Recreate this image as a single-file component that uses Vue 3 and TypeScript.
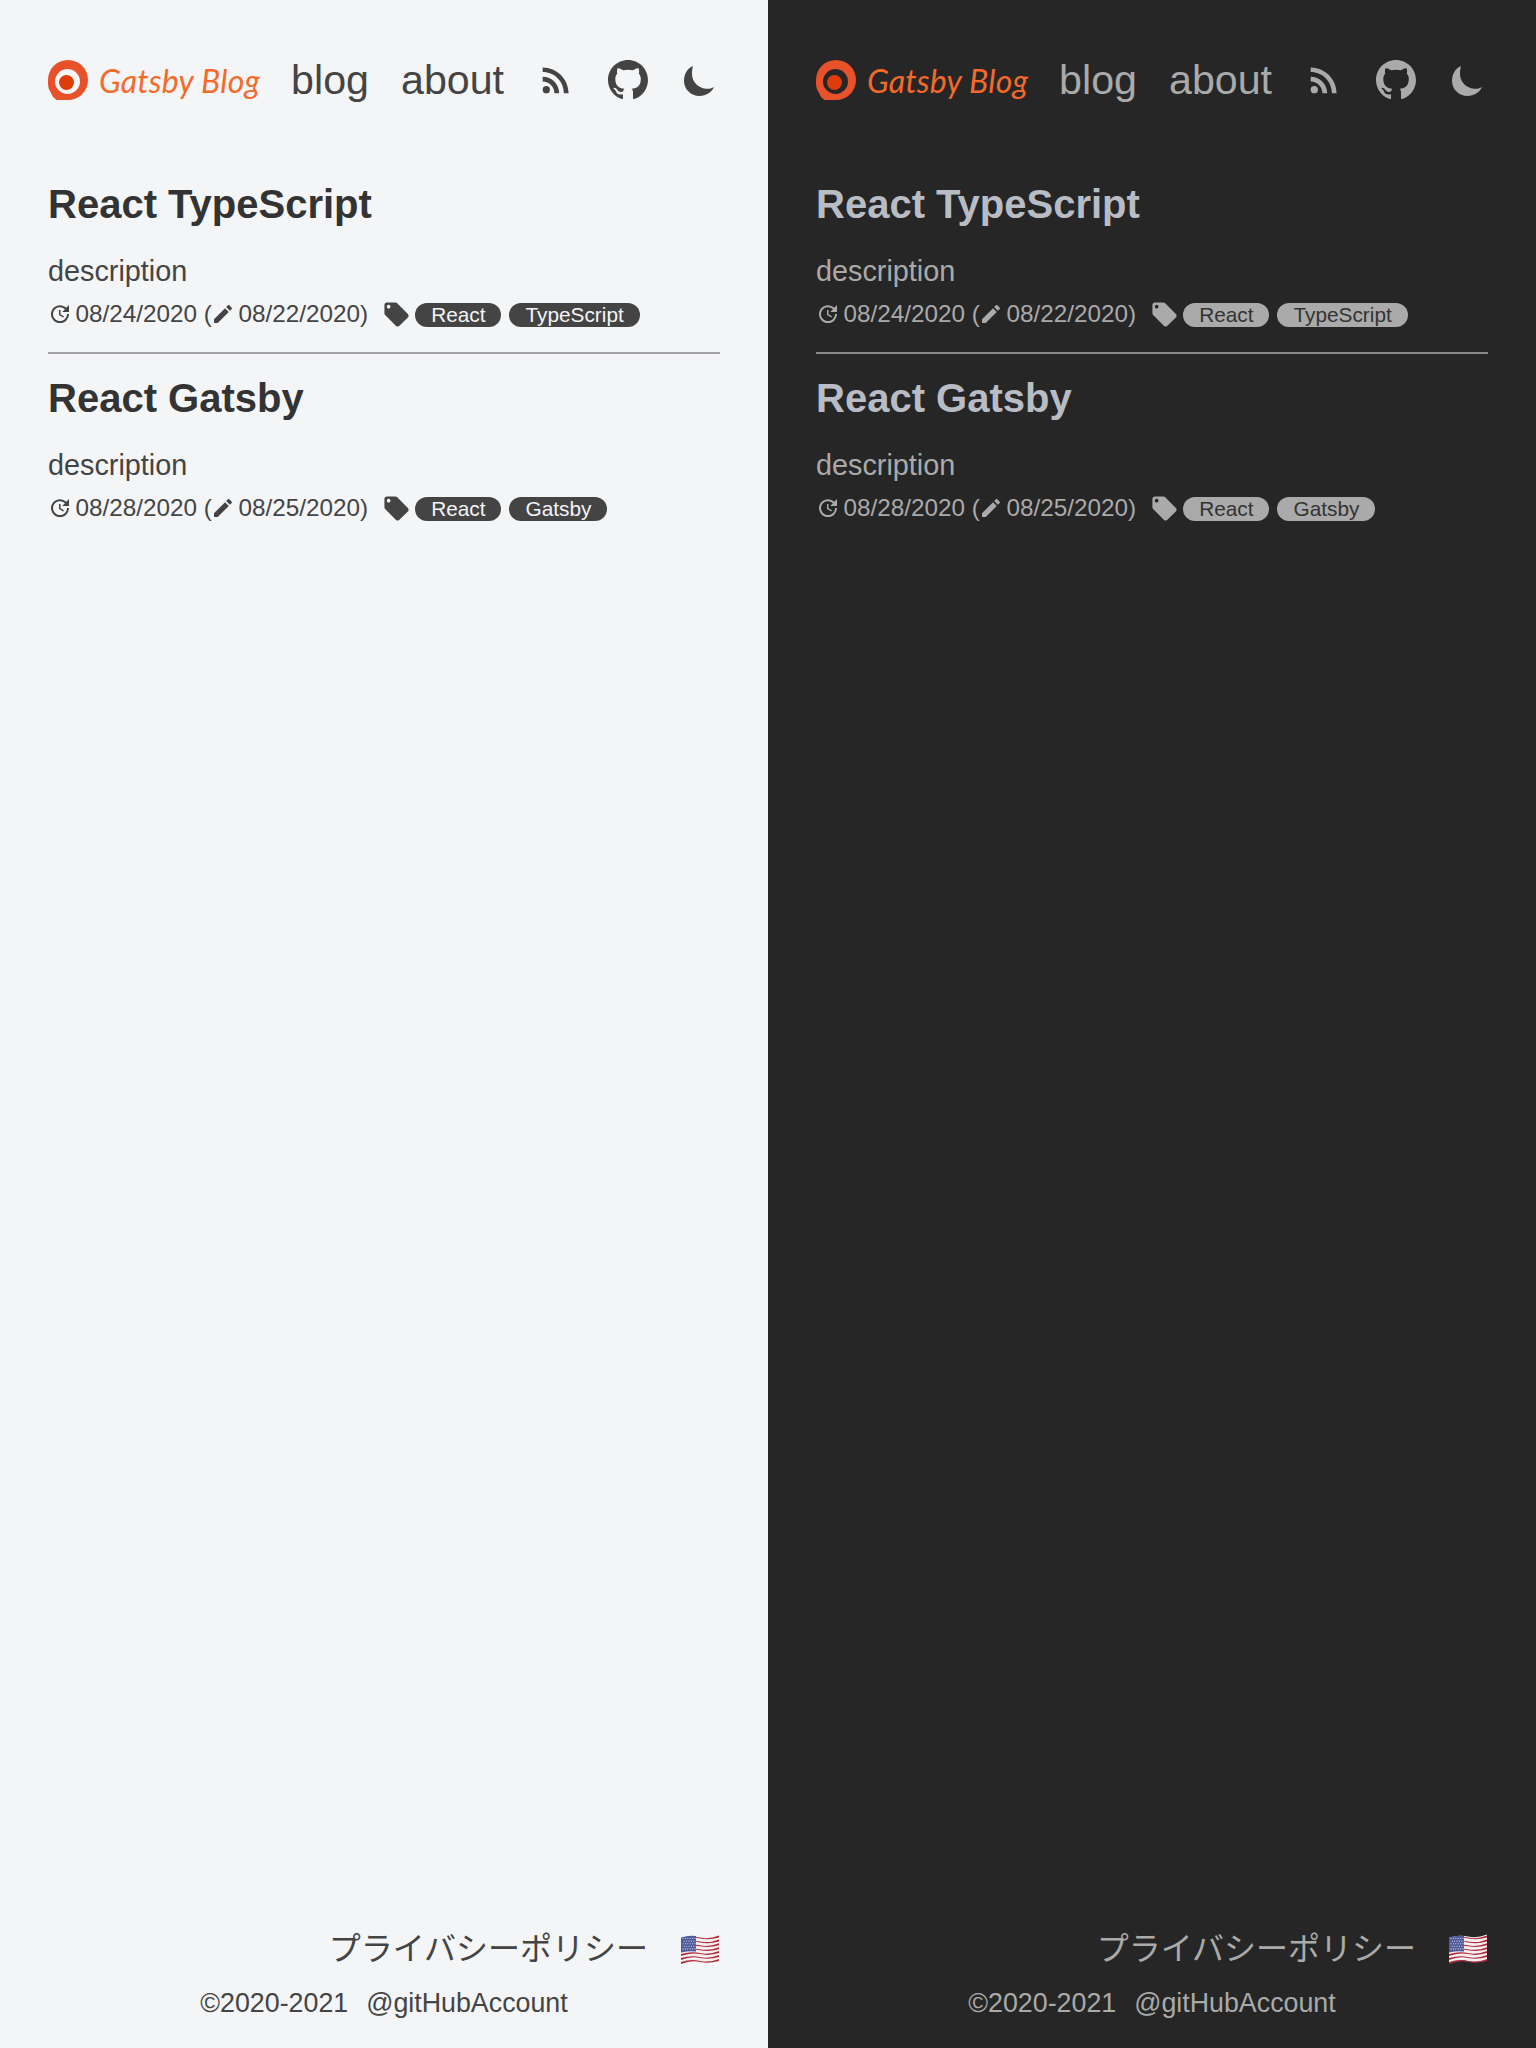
<script setup lang="ts">
interface Post {
  title: string
  created: string
  updated: string
  tags: string[]
}

const themes: string[] = ['light', 'dark']
const posts: Post[] = [
  { title: 'React TypeScript', created: '08/24/2020', updated: '08/22/2020', tags: ['React', 'TypeScript'] },
  { title: 'React Gatsby', created: '08/28/2020', updated: '08/25/2020', tags: ['React', 'Gatsby'] }
]
const stripes: number[] = [0, 1, 2, 3, 4, 5, 6]
const stars: { x: number; y: number }[] = []
for (let r = 0; r < 5; r++) {
  for (let c = 0; c < 6; c++) {
    stars.push({ x: 3 + c * 2.4 + (r % 2) * 1.2, y: 4.5 + r * 2.6 })
  }
}
</script>

<template>
  <div class="page">
    <section v-for="theme in themes" :key="theme" class="pane" :class="theme">
      <header class="top">
        <a class="brand">
          <svg class="logo" viewBox="0 0 40 40">
            <path class="logo-ring" d="M20 0a20 20 0 0 1 0 40H8.500L5 37 .5 28 0 24V20A20 20 0 0 1 20 0zm-.5 9a12.500 12.500 0 1 0 0 25 12.500 12.500 0 0 0 0-25z" fill-rule="evenodd" />
            <circle class="logo-dot" cx="18.500" cy="22.500" r="7.500" />
          </svg>
          <span class="brand-name">Gatsby Blog</span>
        </a>
        <nav class="nav">
          <a class="nav-link">blog</a>
          <a class="nav-link">about</a>
        </nav>
        <div class="tools">
          <svg viewBox="0 0 24 24"><circle cx="6.180" cy="17.820" r="2.180" /><path d="M4 4.440v2.830c7.030 0 12.730 5.700 12.730 12.730h2.830c0-8.590-6.970-15.560-15.560-15.560zm0 5.660v2.830c3.900 0 7.070 3.170 7.070 7.070h2.830c0-5.470-4.430-9.900-9.900-9.900z" /></svg>
          <svg viewBox="0 0 16 16"><path d="M8 0C3.580 0 0 3.580 0 8c0 3.540 2.290 6.530 5.470 7.590.4.070.55-.17.55-.38 0-.19-.01-.82-.01-1.490-2.010.37-2.530-.49-2.690-.94-.09-.23-.48-.94-.82-1.130-.28-.15-.68-.52-.01-.53.63-.01 1.080.58 1.230.82.72 1.210 1.870.87 2.330.66.07-.52.28-.87.51-1.070-1.780-.2-3.640-.89-3.640-3.950 0-.87.31-1.590.82-2.150-.08-.2-.36-1.020.08-2.120 0 0 .67-.21 2.200.82.64-.18 1.320-.27 2-.27.68 0 1.360.09 2 .27 1.530-1.040 2.200-.82 2.200-.82.44 1.100.16 1.920.08 2.120.51.56.82 1.270.82 2.150 0 3.070-1.870 3.750-3.650 3.950.29.25.54.73.54 1.480 0 1.070-.01 1.930-.01 2.200 0 .21.15.46.55.38A8.013 8.013 0 0 0 16 8c0-4.420-3.580-8-8-8z" /></svg>
          <svg viewBox="0 0 40 40"><path d="M13 6C7.500 8 4 14 4 21c0 8.300 7 15 15.500 15C26 36 31.500 32.500 34 27c-2 1.300-4.500 1.800-7 1.800C19 28.800 12 22 12 14c0-3 .3-5.500 1-8z" /></svg>
        </div>
      </header>

      <main class="posts">
        <article v-for="(post, i) in posts" :key="post.title" class="post" :class="{ ruled: i < posts.length - 1 }">
          <h2 class="post-title">{{ post.title }}</h2>
          <p class="post-desc">description</p>
          <div class="meta">
            <svg class="ico" viewBox="0 0 24 24"><path d="M21 10.120h-6.780l2.740-2.820c-2.730-2.700-7.150-2.800-9.880-.1-2.730 2.710-2.730 7.080 0 9.790s7.150 2.710 9.880 0C18.320 15.650 19 14.080 19 12.100h2c0 1.980-.88 4.550-2.640 6.290-3.510 3.480-9.210 3.480-12.720 0-3.500-3.470-3.530-9.110-.02-12.580s9.140-3.470 12.650 0L21 3v7.120zM12.500 8v4.250l3.500 2.080-.72 1.210L11 13V8h1.500z" /></svg>
            <span class="date first">{{ post.created }} (</span>
            <svg class="ico pen" viewBox="0 0 24 24"><path d="M3 17.250V21h3.750L17.810 9.940l-3.750-3.750L3 17.250zM20.710 7.040c.39-.39.39-1.020 0-1.410l-2.340-2.340c-.39-.39-1.020-.39-1.410 0l-1.830 1.830 3.750 3.750 1.830-1.830z" /></svg>
            <span class="date">{{ post.updated }})</span>
            <svg class="ico tag-ico" viewBox="0 0 24 24"><path d="M21.410 11.580l-9-9C12.050 2.220 11.550 2 11 2H4c-1.100 0-2 .9-2 2v7c0 .55.22 1.050.59 1.420l9 9c.36.36.86.58 1.410.58.55 0 1.050-.22 1.410-.59l7-7c.37-.36.59-.86.59-1.410 0-.55-.23-1.060-.59-1.420zM5.500 7C4.670 7 4 6.330 4 5.500S4.670 4 5.500 4 7 4.670 7 5.500 6.330 7 5.500 7z" /></svg>
            <span v-for="tag in post.tags" :key="tag" class="tag">{{ tag }}</span>
          </div>
        </article>
      </main>

      <footer class="foot">
        <div class="foot-links">
          <a class="policy">プライバシーポリシー</a>
          <svg class="flag" viewBox="0 0 40 30" role="img" aria-label="United States flag">
            <path class="st-w" d="M1 3.500q10 -3 19 -1t19 -2v26q-10 2.500 -19 .5t-19 2z" />
            <path v-for="n in stripes" :key="n" class="st-r" :d="`M1 ${4.500 + n * 3.900}q10 -3 19 -1t19 -2v2q-10 3 -19 1t-19 2z`" />
            <path class="st-b" d="M1 3.500q8 -2.500 15 -1.500v15.500q-7 -1 -15 1z" />
            <circle v-for="(s, k) in stars" :key="k" class="st-w" :cx="s.x" :cy="s.y" r=".55" />
          </svg>
        </div>
        <div class="copy">
          <span>©2020-2021</span>
          <a>@gitHubAccount</a>
        </div>
      </footer>
    </section>
  </div>
</template>

<style>
html, body { margin: 0; padding: 0; }
</style>

<style scoped>
.page {
  display: grid;
  grid-template-columns: 768px 768px;
  width: 1536px;
  height: 2048px;
  font-family: "Liberation Sans", "Noto Sans CJK JP", Arial, sans-serif;
}
.pane {
  display: flex;
  flex-direction: column;
  box-sizing: border-box;
  height: 2048px;
  padding: 0 48px;
  background: var(--bg);
  color: var(--text);
}
.light { --bg: #f4f5f7; --text: #444444; --title: #333333; --rule: #a4a4a6; --chip-text: #f4f5f7; }
.dark { --bg: #262626; --text: #aaaaaa; --title: #b8bcc4; --rule: #8a8a8a; --chip-text: #333333; }

.top {
  display: flex;
  align-items: center;
  height: 160px;
}
.brand { display: flex; align-items: center; }
.logo { width: 40px; height: 40px; flex: none; }
.logo-ring { fill: #e8522a; }
.logo-dot { fill: #e03c0a; }
.brand-name {
  margin-left: 11px;
  font-family: "Lato", sans-serif;
  font-style: italic;
  font-weight: 400;
  font-size: 32px;
  letter-spacing: 0.2px;
  color: #f56a2a;
  white-space: nowrap;
}
.nav { display: flex; gap: 32px; margin-left: 31px; }
.nav-link { font-size: 41.2px; line-height: 46px; color: var(--text); }
.tools { display: flex; align-items: center; gap: 32px; margin-left: auto; }
.tools svg { width: 40px; height: 40px; fill: var(--text); display: block; }

.posts { flex: 1; }
.post { padding-bottom: 21px; }
.ruled { border-bottom: 2px solid var(--rule); }
.post-title {
  margin: 0;
  padding-top: 20px;
  font-size: 40px;
  line-height: 48px;
  font-weight: 700;
  color: var(--title);
}
.post-desc {
  margin: 0;
  padding-top: 26px;
  font-size: 28.8px;
  line-height: 34px;
  color: var(--text);
}
.meta {
  display: flex;
  align-items: center;
  height: 34px;
  margin-top: 9px;
  font-size: 24.3px;
  color: var(--text);
  white-space: nowrap;
}
.date { margin-left: 3px; }
.date.first { margin-left: 3.5px; }
.pen { margin-left: -0.5px; }
.ico { width: 24px; height: 24px; fill: var(--text); flex: none; }
.tag-ico { width: 29px; height: 29px; margin-left: 14px; }
.tag {
  margin-left: 8px;
  margin-top: 2px;
  padding: 0 16px;
  height: 24px;
  line-height: 24px;
  border-radius: 12px;
  background: var(--text);
  color: var(--chip-text);
  font-size: 20.8px;
}
.tag-ico + .tag { margin-left: 4px; }
.foot { padding-bottom: 28px; color: var(--text); }
.foot-links {
  display: flex;
  justify-content: flex-end;
  align-items: center;
  height: 40px;
}
.policy { font-size: 32px; line-height: 40px; }
.flag { width: 40px; height: 30px; margin-left: 32px; }
.st-r { fill: #b22a3e; }
.st-w { fill: #f4f0f0; }
.st-b { fill: #4c5a9c; }
.copy {
  display: flex;
  justify-content: center;
  gap: 18px;
  margin-top: 17px;
  font-size: 26.8px;
  line-height: 34px;
}
</style>
